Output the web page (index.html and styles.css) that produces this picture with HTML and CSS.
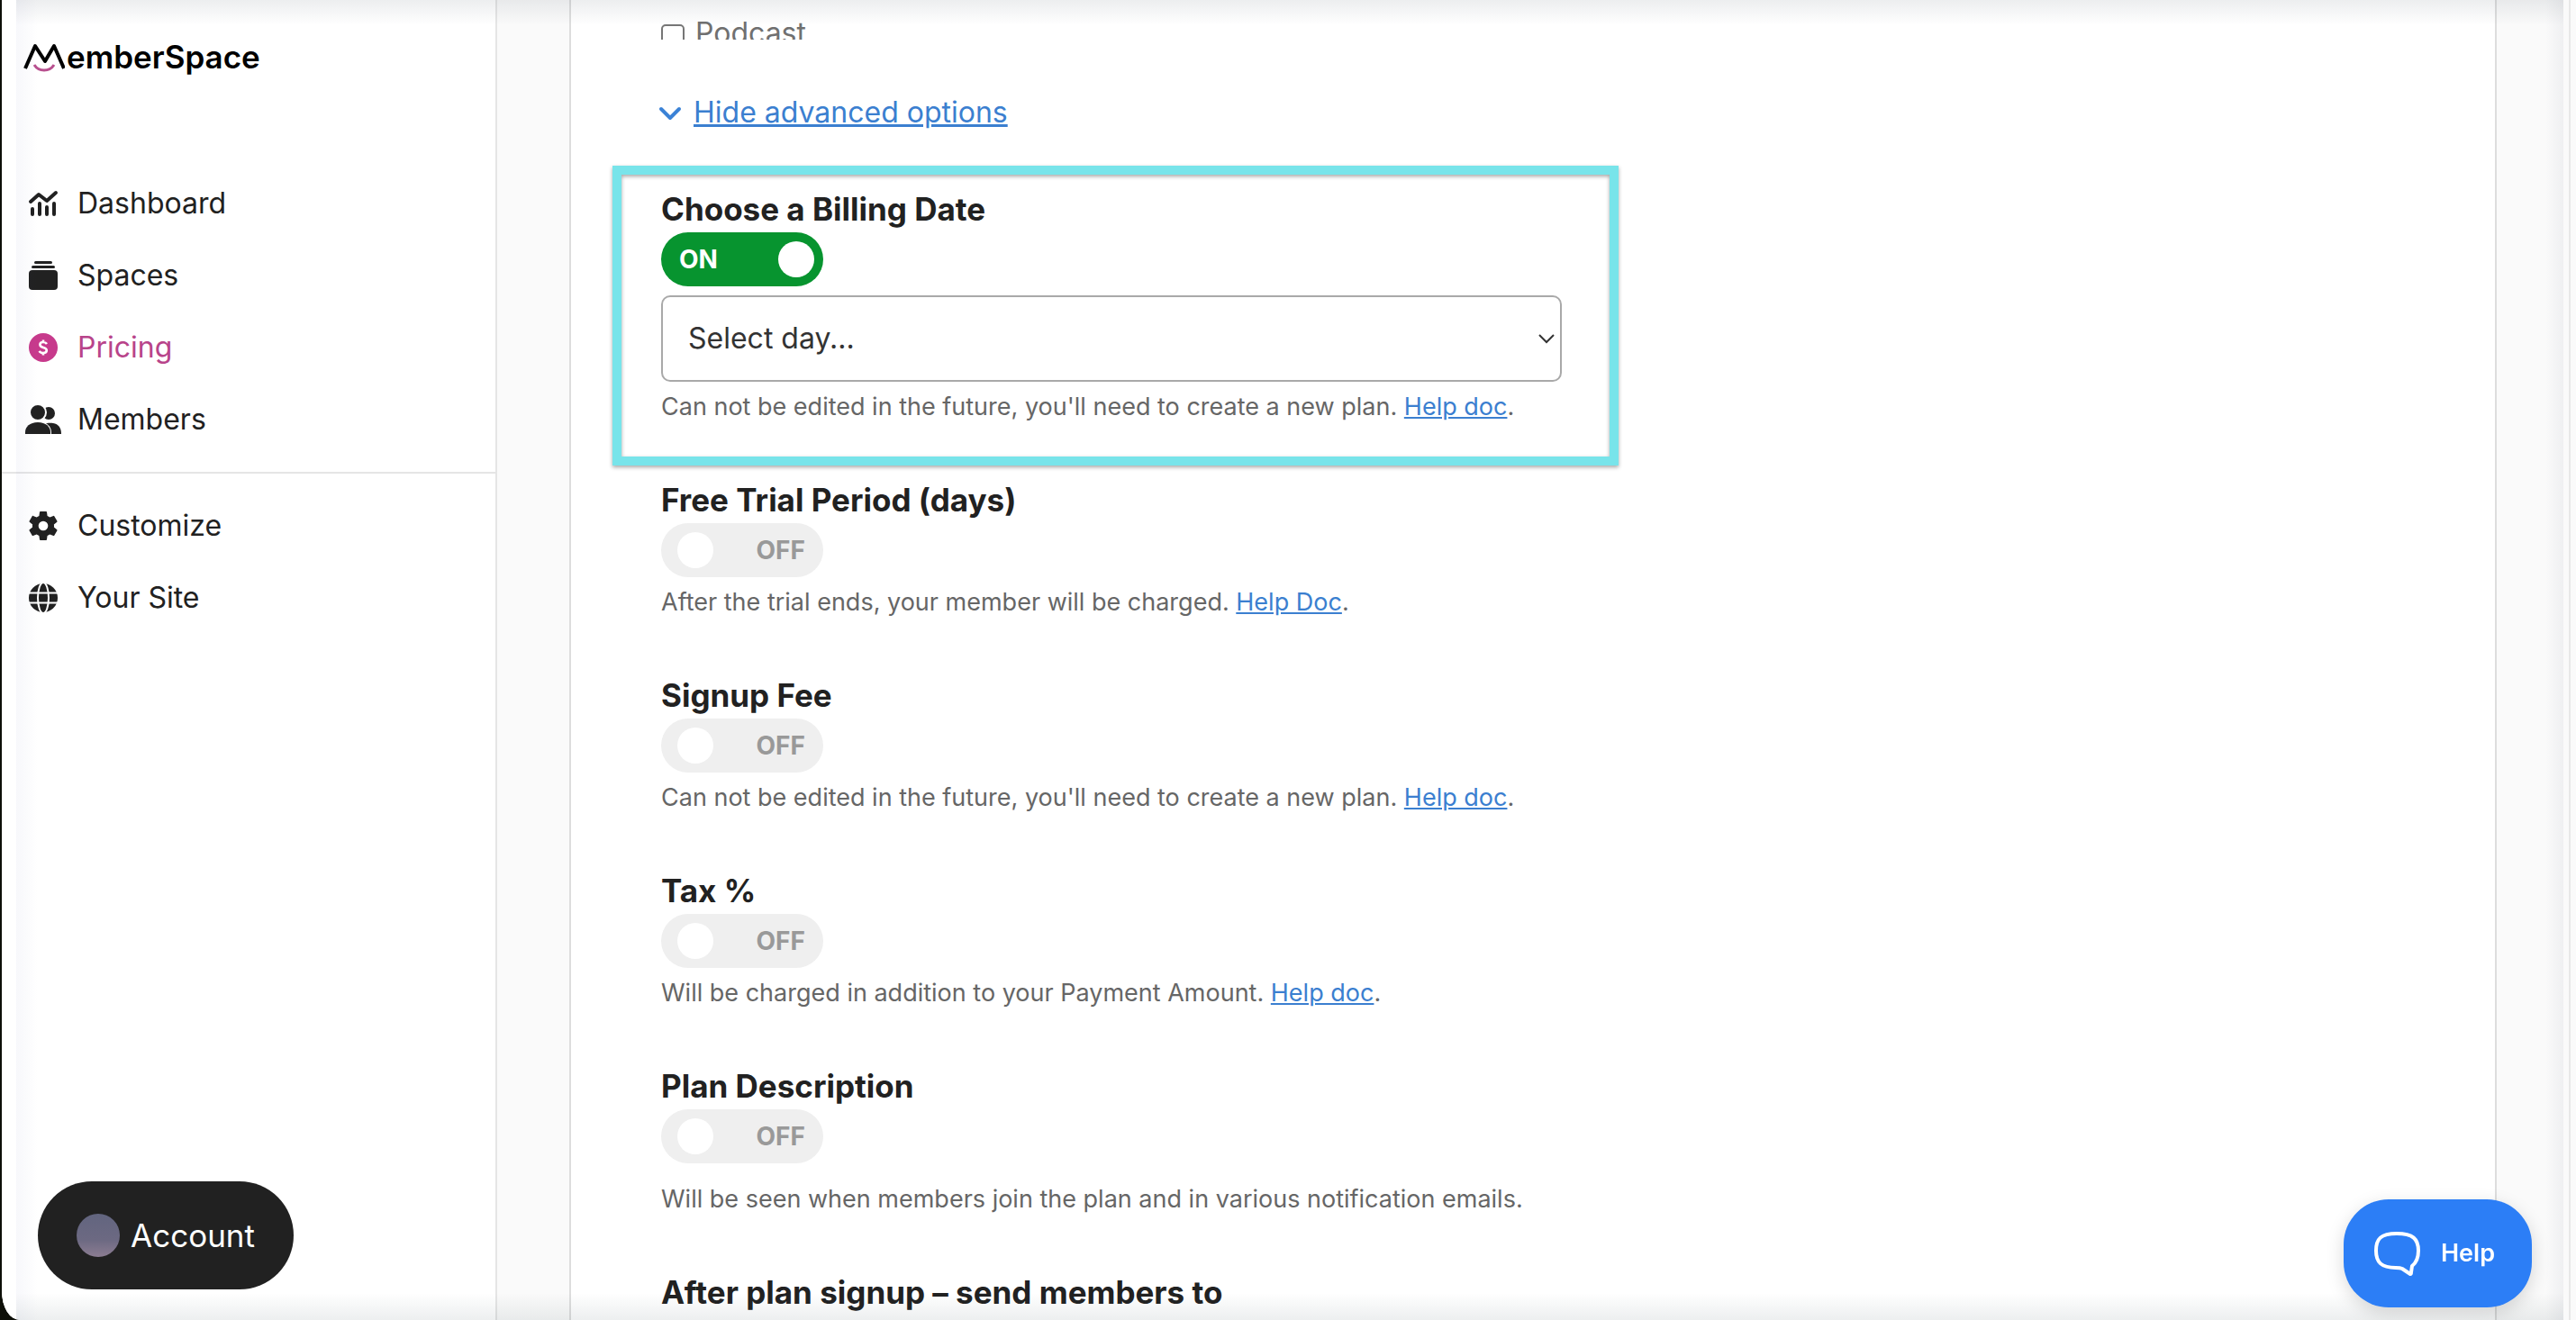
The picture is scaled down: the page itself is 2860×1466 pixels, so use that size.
FILE: index.html
```html
<!DOCTYPE html>
<html lang="en">
<head>
<meta charset="utf-8">
<title>MemberSpace - Pricing</title>
<meta name="viewport" content="width=device-width, initial-scale=1">
<link rel="stylesheet" href="styles.css">
</head>

<body>
<div class="window">
  <aside class="sidebar">
    <a class="logo" href="#" aria-label="MemberSpace">
      <svg class="logo-mark" viewBox="0 0 48 42">
        <path d="M4 34L15 9l11 17L36 9l11 25" fill="none" stroke="#000" stroke-width="4" stroke-linejoin="round"/>
        <path d="M14 30c5 8 17 8 22 0" fill="none" stroke="#b8508f" stroke-width="3"/>
      </svg>
      <span>emberSpace</span>
    </a>

    <nav class="nav">
      <a class="nav-item" href="#">
        <svg class="nav-icon" viewBox="0 0 40 40" fill="none" stroke="currentColor" stroke-width="4" stroke-linecap="round" stroke-linejoin="round">
          <path d="M6 18l9-8 9 7 10-9"/>
          <path d="M8 26v6M16 20v12M24 24v8M32 20v12"/>
        </svg>
        Dashboard
      </a>
      <a class="nav-item" href="#">
        <svg class="nav-icon" viewBox="0 0 40 40" fill="currentColor">
          <rect x="10" y="4" width="20" height="3" rx="1.5"/>
          <rect x="7" y="9" width="26" height="3" rx="1.5"/>
          <rect x="4" y="14" width="32" height="22" rx="4"/>
        </svg>
        Spaces
      </a>
      <a class="nav-item active" href="#">
        <svg class="nav-icon" viewBox="0 0 40 40">
          <circle cx="20" cy="20" r="16" fill="#c73a8c"/>
          <path d="M24 16c-1-1.500-2.300-2-4-2-2.200 0-3.600 1.100-3.600 2.700 0 4.200 7.400 2.200 7.400 6.300 0 1.800-1.500 3-3.800 3-2 0-3.500-.7-4.400-2.200M20 11.500v3M20 25.500v3" fill="none" stroke="#fff" stroke-width="2.600"/>
        </svg>
        Pricing
      </a>
      <a class="nav-item" href="#">
        <svg class="nav-icon" viewBox="0 0 40 40" fill="currentColor">
          <circle cx="26" cy="13" r="7"/>
          <path d="M20 36V26c4-3 9-2 11-2 6 1 9 5 9 12z"/>
          <circle cx="14" cy="12" r="9" stroke="#fff" stroke-width="2"/>
          <path d="M-1 37v-3c0-7 6-12 15-12s15 5 15 12v3z" fill="#fff"/>
          <path d="M0 36v-2c0-6 5-11 14-11s14 5 14 11v2z"/>
        </svg>
        Members
      </a>
      <hr class="nav-divider">
      <a class="nav-item" href="#">
        <svg class="nav-icon" viewBox="0 0 24 24" fill="currentColor">
          <path d="M19.140 12.940c.04-.3.06-.61.06-.94 0-.32-.02-.64-.07-.94l2.030-1.580a.49.49 0 0 0 .12-.61l-1.920-3.320a.488.488 0 0 0-.59-.22l-2.390.96c-.5-.38-1.030-.7-1.620-.94l-.36-2.540a.484.484 0 0 0-.48-.41h-3.840c-.24 0-.43.17-.47.41l-.36 2.540c-.59.24-1.130.57-1.620.94l-2.390-.96c-.22-.08-.47 0-.59.22L2.740 8.870c-.12.21-.08.47.12.61l2.030 1.580c-.05.3-.09.63-.09.94s.02.64.07.94l-2.030 1.580a.49.49 0 0 0-.12.61l1.920 3.320c.12.22.37.29.59.22l2.390-.96c.5.38 1.030.7 1.620.94l.36 2.540c.05.24.24.41.48.41h3.840c.24 0 .44-.17.47-.41l.36-2.540c.59-.24 1.130-.56 1.620-.94l2.390.96c.22.08.47 0 .59-.22l1.920-3.320c.12-.22.07-.47-.12-.61l-2.010-1.580zM12 15.200A3.200 3.200 0 1 1 12 8.800a3.200 3.200 0 0 1 0 6.400z"/>
        </svg>
        Customize
      </a>
      <a class="nav-item" href="#">
        <svg class="nav-icon" viewBox="0 0 40 40">
          <circle cx="20" cy="20" r="16" fill="currentColor"/>
          <path d="M4 14.500h32M4 25.500h32" stroke="#fff" stroke-width="2"/>
          <ellipse cx="20" cy="20" rx="6" ry="17" fill="none" stroke="#fff" stroke-width="2"/>
        </svg>
        Your Site
      </a>
    </nav>

    <button type="button" class="account-btn">
      <span class="avatar"></span>
      Account
    </button>
  </aside>

  <main class="main">
    <form class="card">
      <div class="spaces-list">
        <label class="space-option">
          <input type="checkbox" class="checkbox">
          Podcast
        </label>
      </div>

      <a class="advanced-link" href="#">
        <svg class="advanced-icon" viewBox="0 0 36 40">
          <path d="M0 16l10 10 10-10" fill="none" stroke="#3b82d6" stroke-width="4" stroke-linecap="round" stroke-linejoin="round"/>
        </svg>
        <span>Hide advanced options</span>
      </a>

      <section class="option highlighted">
        <h3 id="billing-title">Choose a Billing Date</h3>
        <label class="toggle on">
          <input type="checkbox" role="switch" aria-labelledby="billing-title" checked>
          <span>ON</span>
        </label>
        <div class="select-wrap">
          <select class="select" aria-labelledby="billing-title">
            <option>Select day...</option>
          </select>
          <svg class="select-arrow" viewBox="0 0 18 12">
            <path d="M1 2l8 8 8-8" fill="none" stroke="#333" stroke-width="2"/>
          </svg>
        </div>
        <p class="note">Can not be edited in the future, you'll need to create a new plan. <a href="#">Help doc</a>.</p>
      </section>

      <section class="option">
        <h3 id="trial-title">Free Trial Period (days)</h3>
        <label class="toggle">
          <input type="checkbox" role="switch" aria-labelledby="trial-title">
          <span>OFF</span>
        </label>
        <p class="note">After the trial ends, your member will be charged. <a href="#">Help Doc</a>.</p>
      </section>

      <section class="option">
        <h3 id="fee-title">Signup Fee</h3>
        <label class="toggle">
          <input type="checkbox" role="switch" aria-labelledby="fee-title">
          <span>OFF</span>
        </label>
        <p class="note">Can not be edited in the future, you'll need to create a new plan. <a href="#">Help doc</a>.</p>
      </section>

      <section class="option">
        <h3 id="tax-title">Tax %</h3>
        <label class="toggle">
          <input type="checkbox" role="switch" aria-labelledby="tax-title">
          <span>OFF</span>
        </label>
        <p class="note">Will be charged in addition to your Payment Amount. <a href="#">Help doc</a>.</p>
      </section>

      <section class="option">
        <h3 id="description-title">Plan Description</h3>
        <label class="toggle">
          <input type="checkbox" role="switch" aria-labelledby="description-title">
          <span>OFF</span>
        </label>
        <p class="note note-spaced">Will be seen when members join the plan and in various notification emails.</p>
      </section>

      <section class="option">
        <h3>After plan signup – send members to</h3>
      </section>
    </form>
  </main>
  <div class="gutter"></div>
  <div class="shade"></div>
</div>

<button type="button" class="help-btn">
  <svg class="help-icon" viewBox="0 0 52 50">
    <path d="M26 3C8 3 3 9 3 22s6 19 22 19c3 0 5 0 7 1l9 6c1 0 1-1 1-2l1-7c5-4 7-9 7-17C50 9 44 3 26 3z" fill="none" stroke="#fff" stroke-width="4" stroke-linejoin="round"/>
  </svg>
  Help
</button>
</body>
</html>
```
FILE: styles.css
```css
*, *::after {
  box-sizing: border-box;
}

body {
  margin: 0;
  background: #0d0f08;
  color: #212121;
  font-family: Inter, "Liberation Sans", sans-serif;
  font-size: 32px;
  line-height: 40px;
}

button, select {
  font: inherit;
}

.window {
  position: relative;
  display: flex;
  height: 100vh;
  margin-left: 2px;
  overflow: hidden;
  background: #fafafa;
  border-bottom-left-radius: 20px 32px;
}

/* sidebar */
.sidebar {
  display: flex;
  flex-direction: column;
  flex: none;
  width: 550px;
  padding: 42px 0 34px;
  background: #fff;
  border-right: 2px solid #e5e5e5;
}

.logo {
  display: flex;
  padding-left: 22px;
  color: #000;
  font-size: 35px;
  font-weight: 600;
  line-height: 42px;
  text-decoration: none;
}

.logo-mark {
  width: 48px;
  height: 42px;
  margin-right: 2px;
}

.nav {
  margin-top: 102px;
}

.nav-item {
  display: flex;
  align-items: center;
  gap: 18px;
  height: 80px;
  padding-left: 26px;
  color: #212121;
  text-decoration: none;
}

.nav-item.active {
  color: #b8448a;
}

.nav-icon {
  width: 40px;
  height: 40px;
  overflow: visible;
}

.nav-divider {
  height: 2px;
  margin: 18px 0;
  border: 0;
  background: #e5e5e5;
}

.account-btn {
  display: flex;
  align-items: center;
  justify-content: center;
  gap: 12px;
  width: 284px;
  height: 120px;
  margin: auto 0 0 40px;
  border: 0;
  border-radius: 60px;
  background: #212121;
  color: #fff;
  font-size: 35px;
}

.avatar {
  width: 48px;
  height: 48px;
  border-radius: 50%;
  background: linear-gradient(#62657f, #6c6982 60%, #8c7d92);
}

/* plan form */
.main {
  flex: 1;
  display: flex;
  padding: 0 80px;
}

.card {
  flex: 1;
  padding: 0 100px;
  background: #fff;
  border: solid #ddd;
  border-width: 0 2px;
}

.spaces-list {
  height: 44px;
  padding-top: 17px;
  overflow: hidden;
}

.space-option {
  display: flex;
  align-items: center;
  gap: 12px;
  color: #707070;
}

.checkbox {
  appearance: none;
  width: 26px;
  height: 26px;
  margin: 6px 0 0;
  border: 2px solid #767676;
  border-radius: 5px;
}

.advanced-link {
  display: flex;
  width: max-content;
  margin: 61px 0;
  color: #3b7fd0;
  text-decoration: none;
}

.advanced-link span {
  text-decoration: underline;
}

.advanced-icon {
  width: 36px;
  height: 40px;
  overflow: visible;
}

.option {
  position: relative;
  margin-bottom: 57px;
}

.highlighted::after {
  content: "";
  position: absolute;
  top: -22px;
  left: -54px;
  width: 1117px;
  bottom: -45px;
  border: 10px solid #78e4ea;
  filter: drop-shadow(0 2px 2px rgba(0, 0, 0, 0.35));
  pointer-events: none;
}

h3 {
  margin: 0;
  font-size: 35px;
  font-weight: 700;
  line-height: 52px;
}

.toggle {
  display: flex;
  align-items: center;
  justify-content: space-between;
  width: 180px;
  height: 60px;
  padding: 0 20px 0 18px;
  border-radius: 30px;
  background: #efefef;
  color: #999;
  font-size: 28px;
  font-weight: 700;
}

.toggle input {
  appearance: none;
  width: 40px;
  height: 40px;
  margin: 0;
  border-radius: 50%;
  background: #fff;
}

.toggle.on {
  flex-direction: row-reverse;
  padding: 0 10px 0 20px;
  background: #07942f;
  color: #fff;
}

.select-wrap {
  position: relative;
  max-width: 1000px;
  margin-top: 10px;
}

.select {
  appearance: none;
  display: block;
  width: 100%;
  height: 96px;
  padding: 0 28px;
  border: 2px solid #a9a9a9;
  border-radius: 10px;
  background: #fff;
  color: #333;
}

.select-arrow {
  position: absolute;
  top: 42px;
  right: 8px;
  width: 18px;
  height: 12px;
  pointer-events: none;
}

.note {
  margin: 8px 0 0;
  color: #666;
  font-size: 27px;
}

.note-spaced {
  margin-top: 20px;
}

.note a {
  color: #3b7fd0;
}

.gutter {
  width: 8px;
  border-left: 2px solid #e8e8e8;
}

/* soft darkening round the window's edge */
.shade {
  position: absolute;
  top: 0;
  right: 14px;
  bottom: 0;
  left: 16px;
  background:
    linear-gradient(rgba(50, 65, 80, 0.09), rgba(50, 65, 80, 0)) top / 100% 28px no-repeat,
    linear-gradient(rgba(50, 75, 80, 0), rgba(50, 75, 80, 0.09)) bottom / 100% 30px no-repeat,
    linear-gradient(90deg, rgba(60, 70, 160, 0.04), rgba(60, 70, 160, 0)) left / 24px 100% no-repeat,
    linear-gradient(90deg, rgba(60, 70, 100, 0), rgba(60, 70, 100, 0.06)) right / 20px 100% no-repeat;
  pointer-events: none;
}

.help-btn {
  position: fixed;
  right: 49px;
  bottom: 14px;
  display: flex;
  align-items: center;
  gap: 23px;
  height: 120px;
  padding: 0 41px 0 33px;
  border: 0;
  border-radius: 50px;
  background: #2c7ef6;
  box-shadow: 0 6px 20px rgba(0, 0, 0, 0.15);
  color: #fff;
  font-size: 27px;
  font-weight: 600;
}

.help-icon {
  width: 52px;
  height: 50px;
}
```
